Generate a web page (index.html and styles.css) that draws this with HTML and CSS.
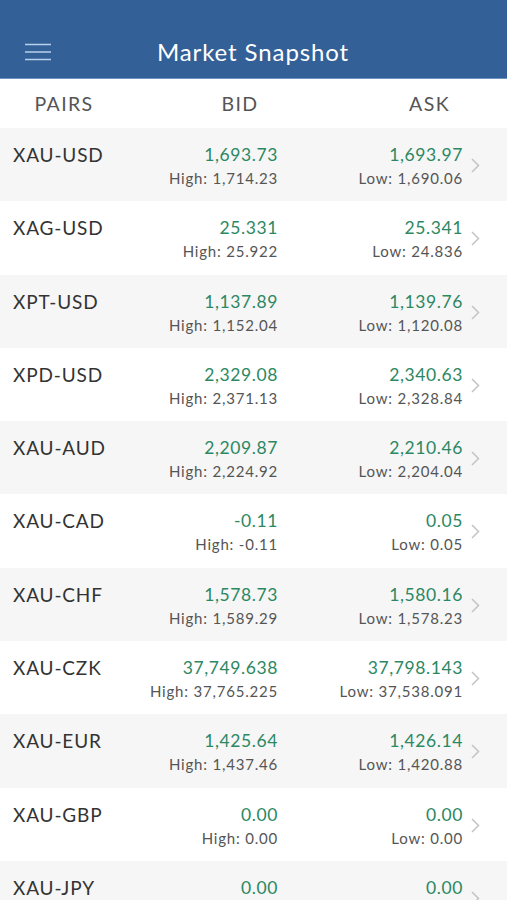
FILE: index.html
```html
<!DOCTYPE html>
<html>
<head>
<meta charset="utf-8">
<link rel="stylesheet" href="styles.css">
</head>
<body>
<header class="topbar">
  <svg class="menu" width="26" height="18" viewBox="0 0 26 18">
    <path d="M0 1.5H26M0 9H26M0 16.5H26" stroke="#b9d0ec" stroke-width="1.6" fill="none"/>
  </svg>
  <h1 class="title">Market Snapshot</h1>
</header>
<div class="colhead">
  <span>PAIRS</span><span>BID</span><span>ASK</span>
</div>
<div class="list">
  <div class="row"><div class="pair">XAU-USD</div><div class="val"><div class="main">1,693.73</div><div class="sub">High: 1,714.23</div></div><div class="val"><div class="main">1,693.97</div><div class="sub">Low: 1,690.06</div></div><div class="chev"><svg width="9" height="15" viewBox="0 0 9 15"><path d="M1 1l6.5 6.5L1 14" stroke="#c4c4c4" stroke-width="1.5" fill="none"/></svg></div></div>
  <div class="row"><div class="pair">XAG-USD</div><div class="val"><div class="main">25.331</div><div class="sub">High: 25.922</div></div><div class="val"><div class="main">25.341</div><div class="sub">Low: 24.836</div></div><div class="chev"><svg width="9" height="15" viewBox="0 0 9 15"><path d="M1 1l6.5 6.5L1 14" stroke="#c4c4c4" stroke-width="1.5" fill="none"/></svg></div></div>
  <div class="row"><div class="pair">XPT-USD</div><div class="val"><div class="main">1,137.89</div><div class="sub">High: 1,152.04</div></div><div class="val"><div class="main">1,139.76</div><div class="sub">Low: 1,120.08</div></div><div class="chev"><svg width="9" height="15" viewBox="0 0 9 15"><path d="M1 1l6.5 6.5L1 14" stroke="#c4c4c4" stroke-width="1.5" fill="none"/></svg></div></div>
  <div class="row"><div class="pair">XPD-USD</div><div class="val"><div class="main">2,329.08</div><div class="sub">High: 2,371.13</div></div><div class="val"><div class="main">2,340.63</div><div class="sub">Low: 2,328.84</div></div><div class="chev"><svg width="9" height="15" viewBox="0 0 9 15"><path d="M1 1l6.5 6.5L1 14" stroke="#c4c4c4" stroke-width="1.5" fill="none"/></svg></div></div>
  <div class="row"><div class="pair">XAU-AUD</div><div class="val"><div class="main">2,209.87</div><div class="sub">High: 2,224.92</div></div><div class="val"><div class="main">2,210.46</div><div class="sub">Low: 2,204.04</div></div><div class="chev"><svg width="9" height="15" viewBox="0 0 9 15"><path d="M1 1l6.5 6.5L1 14" stroke="#c4c4c4" stroke-width="1.5" fill="none"/></svg></div></div>
  <div class="row"><div class="pair">XAU-CAD</div><div class="val"><div class="main">-0.11</div><div class="sub">High: -0.11</div></div><div class="val"><div class="main">0.05</div><div class="sub">Low: 0.05</div></div><div class="chev"><svg width="9" height="15" viewBox="0 0 9 15"><path d="M1 1l6.5 6.5L1 14" stroke="#c4c4c4" stroke-width="1.5" fill="none"/></svg></div></div>
  <div class="row"><div class="pair">XAU-CHF</div><div class="val"><div class="main">1,578.73</div><div class="sub">High: 1,589.29</div></div><div class="val"><div class="main">1,580.16</div><div class="sub">Low: 1,578.23</div></div><div class="chev"><svg width="9" height="15" viewBox="0 0 9 15"><path d="M1 1l6.5 6.5L1 14" stroke="#c4c4c4" stroke-width="1.5" fill="none"/></svg></div></div>
  <div class="row"><div class="pair">XAU-CZK</div><div class="val"><div class="main">37,749.638</div><div class="sub">High: 37,765.225</div></div><div class="val"><div class="main">37,798.143</div><div class="sub">Low: 37,538.091</div></div><div class="chev"><svg width="9" height="15" viewBox="0 0 9 15"><path d="M1 1l6.5 6.5L1 14" stroke="#c4c4c4" stroke-width="1.5" fill="none"/></svg></div></div>
  <div class="row"><div class="pair">XAU-EUR</div><div class="val"><div class="main">1,425.64</div><div class="sub">High: 1,437.46</div></div><div class="val"><div class="main">1,426.14</div><div class="sub">Low: 1,420.88</div></div><div class="chev"><svg width="9" height="15" viewBox="0 0 9 15"><path d="M1 1l6.5 6.5L1 14" stroke="#c4c4c4" stroke-width="1.5" fill="none"/></svg></div></div>
  <div class="row"><div class="pair">XAU-GBP</div><div class="val"><div class="main">0.00</div><div class="sub">High: 0.00</div></div><div class="val"><div class="main">0.00</div><div class="sub">Low: 0.00</div></div><div class="chev"><svg width="9" height="15" viewBox="0 0 9 15"><path d="M1 1l6.5 6.5L1 14" stroke="#c4c4c4" stroke-width="1.5" fill="none"/></svg></div></div>
  <div class="row"><div class="pair">XAU-JPY</div><div class="val"><div class="main">0.00</div><div class="sub">High: 0.00</div></div><div class="val"><div class="main">0.00</div><div class="sub">Low: 0.00</div></div><div class="chev"><svg width="9" height="15" viewBox="0 0 9 15"><path d="M1 1l6.5 6.5L1 14" stroke="#c4c4c4" stroke-width="1.5" fill="none"/></svg></div></div>
</div>
</body>
</html>
```
FILE: styles.css
```css
html, body {
  margin: 0;
  padding: 0;
  background: #ffffff;
  font-family: "Lato", "Open Sans", sans-serif;
  overflow: hidden;
  height: 900px;
}
.topbar {
  height: 79px;
  background: #336096;
  border-bottom: 1px solid #6f93bf;
  box-sizing: border-box;
  display: flex;
  align-items: flex-end;
  position: relative;
}
.menu {
  position: absolute;
  left: 25px;
  top: 43px;
}
.title {
  margin: 0;
  width: 100%;
  text-align: center;
  color: #ffffff;
  font-weight: 400;
  font-size: 24px;
  letter-spacing: 0.9px;
  line-height: 30px;
  padding-bottom: 11px;
  padding-right: 1px;
}
.colhead {
  height: 49px;
  display: grid;
  grid-template-columns: 128px 224px 1fr;
  align-items: center;
  color: #555555;
  font-size: 19.5px;
  letter-spacing: 1.4px;
  text-align: center;
}
.row {
  height: 73.3px;
  display: grid;
  grid-template-columns: 150px 115px 185px 1fr;
  padding-left: 13px;
  box-sizing: border-box;
  white-space: nowrap;
}
.row:nth-child(odd) {
  background: #f6f6f6;
}
.pair {
  color: #333333;
  font-size: 19px;
  letter-spacing: 0.85px;
  padding-top: 15px;
  line-height: 24px;
}
.val {
  display: flex;
  flex-direction: column;
  align-items: flex-end;
  padding-top: 15px;
  min-width: 0;
}
.main {
  color: #2c8863;
  font-size: 17.5px;
  letter-spacing: 0.6px;
  line-height: 23px;
}
.sub {
  color: #555555;
  font-size: 15px;
  letter-spacing: 0.8px;
  line-height: 24px;
}
.chev {
  padding-left: 8px;
  padding-top: 29px;
}
```
